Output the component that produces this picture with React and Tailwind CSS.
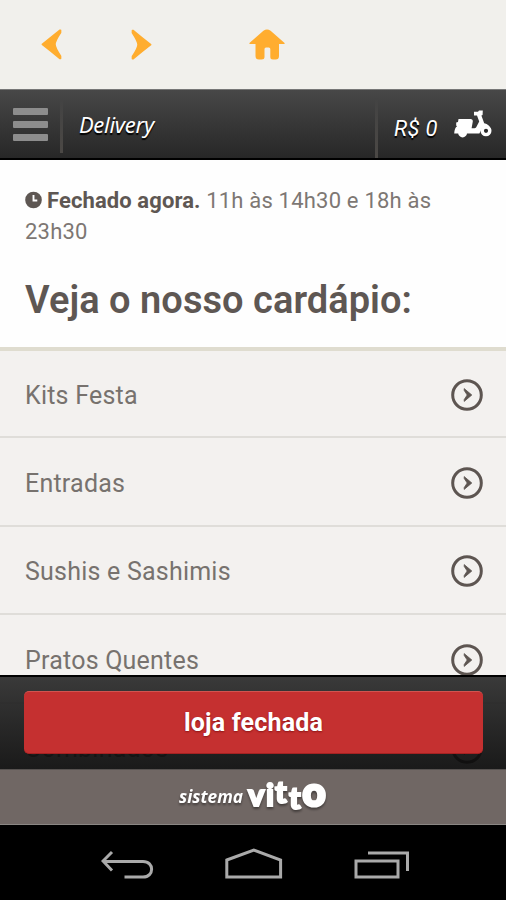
const categories = ['Kits Festa', 'Entradas', 'Sushis e Sashimis', 'Pratos Quentes', 'Combinados'];

const ArrowIcon = ({ className }) => (
  <svg width="21" height="31" viewBox="0 0 21 31" fill="#ffad2f" stroke="#ffad2f" strokeWidth="1.5" strokeLinejoin="round" className={className}>
    <path d="M1.3 15.3 Q10 8.5 19 1.2 L19.6 1.2 L19.6 3.5 Q14 12 14 15.3 Q14 18.6 19.6 27.2 L19.6 29.6 L19 29.6 Q10 22 1.3 15.3 Z" />
  </svg>
);

const HouseIcon = () => (
  <svg width="36" height="31" viewBox="0 0 36 31" fill="#ffad2f">
    <path d="M14.4 1.7 Q18 -.9 21.6 1.7 L35 13.4 Q36.6 15 34.5 15 H30 V27 Q30 30.5 26.5 30.5 H24 Q21.3 30.5 21.3 28 V20 Q21.3 18.5 19.8 18.5 H17 Q15.5 18.5 15.5 20 V28 Q15.5 30.5 12.5 30.5 H10 Q6.5 30.5 6.5 27 V15 H1.5 Q-.5 15 1 13.4 Z" />
  </svg>
);

const ScooterIcon = () => (
  <svg width="38" height="29" viewBox="0 0 38 29" fill="#fff">
    <path d="M4.5 9 H16.5 Q19 9 18.8 11.5 L17.6 18.3 H20.5 Q21.5 18.3 22.2 17.2 L25.2 11.6 L23 5.6 L20 5.6 V1.8 L24 1.8 L25 .4 L28.8 .4 L28.6 5 L27.4 5.6 L30.2 13.2 Q35.5 14.2 37.4 20 L32 16.5 L28 18 L25.4 23.4 H.2 Q.6 17.5 3 16.4 L2.2 15.4 V12.6 L4 12 Z" />
    <circle cx="8.6" cy="23" r="4.4" />
    <circle cx="32" cy="20.8" r="3.8" fill="#2b2b2b" stroke="#fff" strokeWidth="3.4" />
  </svg>
);

const ClockIcon = () => (
  <svg width="17" height="18" viewBox="0 0 18 18" className="mr-[5px] inline-block align-[-1px]">
    <circle cx="9" cy="9" r="8.8" fill="#5e5753" />
    <path d="M9 3.8 V9.5 H13" fill="none" stroke="#fff" strokeWidth="2" />
  </svg>
);

const CircleArrow = () => (
  <svg width="32" height="32" viewBox="0 0 32 32">
    <circle cx="16" cy="16" r="14.3" fill="none" stroke="#5d5551" strokeWidth="3" />
    <path d="M13.2 9.6 L20.8 16 L13.2 22.4 L13.2 20.6 L16.2 16 L13.2 11.4 Z" fill="#5d5551" stroke="#5d5551" strokeWidth=".8" />
  </svg>
);

const TopNav = () => (
  <nav className="flex h-[89px] items-center bg-[#f1f0ec]">
    <ArrowIcon className="ml-[41px]" />
    <ArrowIcon className="ml-[69px] rotate-180" />
    <div className="ml-[97px]">
      <HouseIcon />
    </div>
  </nav>
);

const Header = () => (
  <header className="flex h-[71px] items-center border-t border-b-2 border-t-[#777] border-b-black bg-linear-to-b from-[#484848] to-[#272727] text-white italic">
    <div className="ml-[13px] flex w-[35px] flex-col gap-[6px] pt-px">
      <span className="h-[7px] rounded-[1px] bg-[#8d8d8d]" />
      <span className="h-[7px] rounded-[1px] bg-[#8d8d8d]" />
      <span className="h-[7px] rounded-[1px] bg-[#8d8d8d]" />
    </div>
    <div className="mt-1 ml-[12px] h-[54px] w-[3px] bg-linear-to-b from-[#434343] to-[#4b4845]" />
    <h1 className="ml-[16px] flex-1 font-['Noto_Sans',sans-serif] text-[22px] tracking-[-0.3px] [text-shadow:0_2px_1px_#000]">Delivery</h1>
    <div className="h-[60px] w-[3px] self-end bg-linear-to-b from-[#434343] to-[#4b4845]" />
    <span className="ml-[16px] w-[60px] pt-[8px] text-[22px] tracking-[0.3px] [text-shadow:0_2px_1px_#000]">R$ 0</span>
    <div className="mr-[14px]">
      <ScooterIcon />
    </div>
  </header>
);

const Intro = () => (
  <section className="h-[191px] border-b-4 border-[#dfdccf] bg-[#fefefe] px-[25px] pt-[25px] text-[#5e5753]">
    <p className="text-[22px] leading-[31px] tracking-[0.1px] text-[#7d7773]">
      <ClockIcon />
      <strong className="font-bold text-[#5e5753]">Fechado agora.</strong>{' '}
      <span className="tracking-[0.2px]">11h às 14h30 e 18h às 23h30</span>
    </p>
    <h2 className="mt-[29px] text-[38px] leading-[48px] font-semibold tracking-[0.04px] whitespace-nowrap">Veja o nosso cardápio:</h2>
  </section>
);

const MenuList = () => (
  <ul className="bg-[#f3f1ef]">
    {categories.map((name) => (
      <li key={name} className="flex h-[88.5px] items-center justify-between border-b-2 border-[#dfddd9] pt-[3px] pr-[23px] pl-[25px] text-[25px] tracking-[0.22px] text-[#77726e] first:h-[87px]">
        <span className="pt-px">{name}</span>
        <CircleArrow />
      </li>
    ))}
  </ul>
);

const VittoLogo = () => (
  <svg width="156" height="44" viewBox="0 0 156 44" fill="#fff" className="drop-shadow-[0_2px_1px_rgba(0,0,0,0.4)]">
    <text x="4" y="27" textLength="64" lengthAdjust="spacingAndGlyphs" className="font-['Open_Sans',sans-serif] text-[18px] font-bold italic">sistema</text>
    <text x="73 91 100 114" y="29.5 29.5 27 32.5" stroke="#fff" strokeWidth="2" className="font-[Lato,sans-serif] text-[31px] font-black">
      vitt<tspan x="127.5" y="29.5" strokeWidth="3" className="text-[40px]">o</tspan>
    </text>
  </svg>
);

const BottomBar = () => (
  <div className="absolute inset-x-0 bottom-0">
    <div className="h-[94px] border-t-2 border-black bg-linear-to-b from-[#2a2a2aeb] to-[#080808eb] pt-[14px] pr-[23px] pl-[24px]">
      <button className="h-[63px] w-full rounded-[5px] border-t border-b border-t-[#d15450] border-b-[#a52222] bg-[#c53030] text-[25px] font-bold tracking-[0.2px] text-white [text-shadow:0_1px_2px_#8c1515]">
        loja fechada
      </button>
    </div>
    <footer className="flex h-[56px] justify-center border-t border-b border-t-[#575250] border-b-[#8b8784] bg-[#706764] pt-[6px]">
      <VittoLogo />
    </footer>
  </div>
);

const SystemBar = () => (
  <div className="flex h-[75px] justify-between bg-black pt-[22px] pr-[96px] pl-[101px]">
    <svg width="54" height="34" viewBox="0 0 54 34" fill="none" stroke="#aaa" strokeWidth="3">
      <path d="M11 5 L2 14 L11 23.5 M2 14.5 H42 C53.5 14.5 53.5 30 42 30 H23.5" />
    </svg>
    <svg width="58" height="34" viewBox="0 0 58 34" fill="none" stroke="#aaa" strokeWidth="3" className="-ml-[2px]">
      <path d="M1.8 13 L28.8 3 L55.6 13 V30 H1.8 Z" />
    </svg>
    <svg width="56" height="34" viewBox="0 0 56 34" fill="none" stroke="#aaa" strokeWidth="3">
      <path d="M2 14 H44 V30 H2 Z M14 6 H53.5 V24" />
    </svg>
  </div>
);

export default function App() {
  return (
    <div className="flex h-[900px] w-[506px] flex-col overflow-hidden bg-black font-[Roboto,sans-serif]">
      <TopNav />
      <main className="relative h-[736px] overflow-hidden">
        <Header />
        <Intro />
        <MenuList />
        <BottomBar />
      </main>
      <SystemBar />
    </div>
  );
}
